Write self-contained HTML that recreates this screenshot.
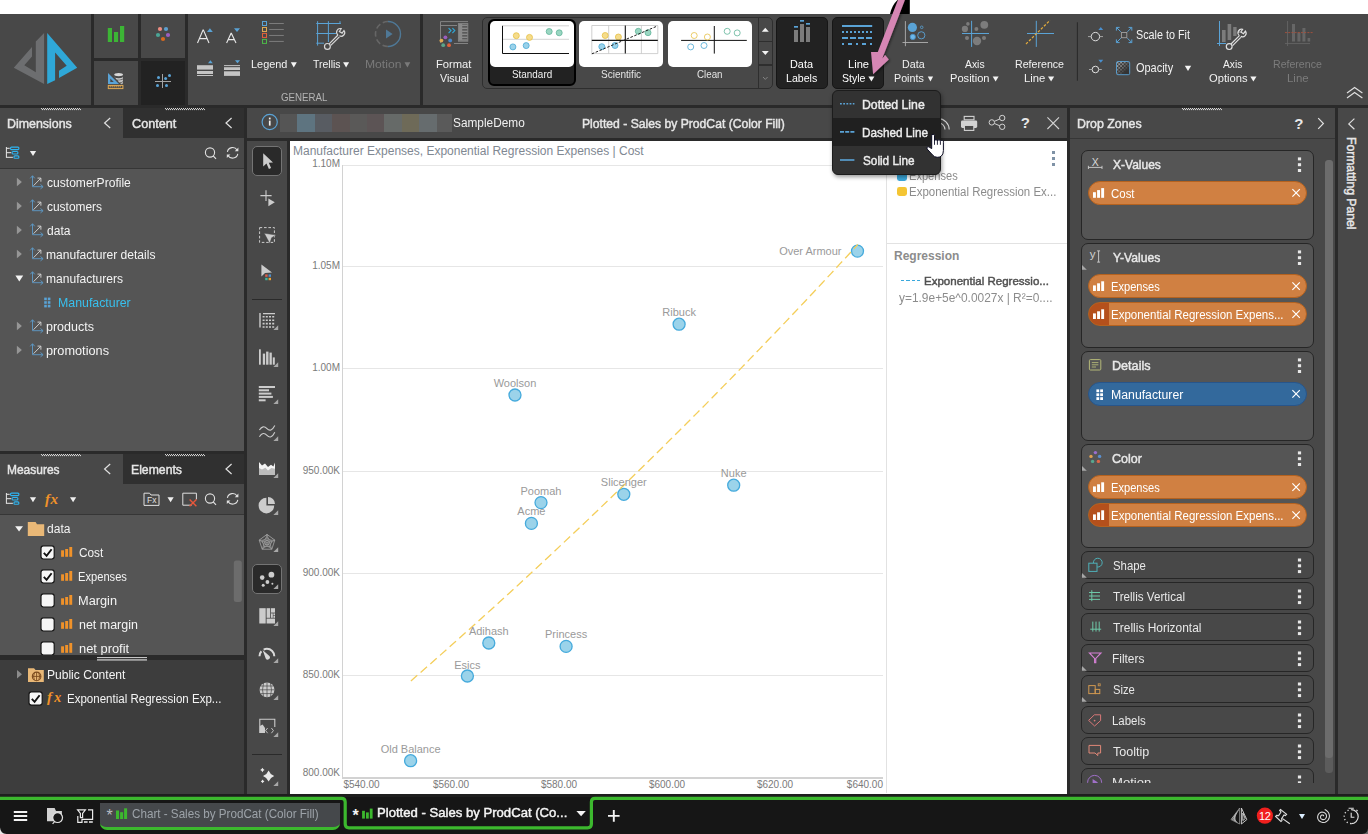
<!DOCTYPE html>
<html><head><meta charset="utf-8"><title>Plotted - Sales by ProdCat</title>
<style>
html,body{margin:0;padding:0;}
body{width:1368px;height:834px;overflow:hidden;background:#2a2a2a;font-family:"Liberation Sans",sans-serif;position:relative;}
#app{position:absolute;left:0;top:0;width:1368px;height:834px;overflow:hidden;}
#app div{position:absolute;box-sizing:border-box;}
.t{white-space:nowrap;line-height:1;}
svg.ov{position:absolute;left:0;top:0;overflow:visible;pointer-events:none;}
</style></head><body><div id="app">
<div style="left:0px;top:0px;width:1368px;height:14px;background:#ffffff;"></div>
<div style="left:0px;top:14px;width:1368px;height:91px;background:#484848;"></div>
<div style="left:91px;top:14px;width:3px;height:91px;background:#2a2a2a;"></div>
<div style="left:138px;top:14px;width:3px;height:91px;background:#2a2a2a;"></div>
<div style="left:185px;top:14px;width:3px;height:91px;background:#2a2a2a;"></div>
<div style="left:94px;top:58px;width:91px;height:3px;background:#2a2a2a;"></div>
<div style="left:141px;top:61px;width:44px;height:44px;background:#222222;"></div>
<div style="left:420px;top:14px;width:3px;height:91px;background:#2a2a2a;"></div>
<div style="left:0px;top:108px;width:123px;height:30px;background:#484848;"></div>
<div style="left:123px;top:108px;width:121px;height:30px;background:#303030;"></div>
<div style="left:0px;top:138px;width:244px;height:30px;background:#484848;"></div>
<div style="left:0px;top:168px;width:244px;height:1px;background:#363636;"></div>
<div style="left:0px;top:169px;width:244px;height:282px;background:#555555;"></div>
<div style="left:0px;top:451px;width:244px;height:3px;background:#2a2a2a;"></div>
<div style="left:0px;top:454px;width:123px;height:30px;background:#484848;"></div>
<div style="left:123px;top:454px;width:121px;height:30px;background:#303030;"></div>
<div style="left:0px;top:484px;width:244px;height:30px;background:#484848;"></div>
<div style="left:0px;top:514px;width:244px;height:1px;background:#363636;"></div>
<div style="left:0px;top:515px;width:244px;height:141px;background:#555555;"></div>
<div style="left:0px;top:656px;width:244px;height:4px;background:#2a2a2a;"></div>
<div style="left:0px;top:660px;width:244px;height:134px;background:#3d3d3d;"></div>
<div style="left:247px;top:108px;width:820px;height:30px;background:#484848;"></div>
<div style="left:247px;top:141px;width:40px;height:653px;background:#484848;"></div>
<div style="left:290px;top:141px;width:777px;height:653px;background:#ffffff;"></div>
<div style="left:1070px;top:108px;width:265px;height:30px;background:#484848;"></div>
<div style="left:1070px;top:139px;width:265px;height:654px;background:#555555;"></div>
<div style="left:1338px;top:108px;width:30px;height:686px;background:#484848;"></div>
<div style="left:0px;top:797px;width:1368px;height:3px;background:#3cb832;"></div>
<div style="left:0px;top:800px;width:1368px;height:34px;background:#1c1c1c;"></div>
<svg class="ov" width="1368" height="834" viewBox="0 0 1368 834" >
<polygon points="13.8,67.8 32,46.9 32,56.4 24.3,65.3 35.8,72.2 35.8,41.6 44.1,33 44.1,84" fill="#6d6e70"/>
<polygon points="47.2,33 77.2,67.8 59,77.9 59,70.8 66.7,65.8 55.1,52.6 55.1,80.2 47.2,84" fill="#2fa8d8"/>
<rect x="107.8" y="28" width="4.2" height="14" fill="#3cb535"/><rect x="114" y="32" width="4.1" height="10" fill="#3cb535"/><rect x="120" y="26" width="4.2" height="16" fill="#3cb535"/>
<circle cx="160" cy="29" r="2.1" fill="#ee8c80"/><circle cx="166" cy="29" r="2.1" fill="#5c9fd0"/><circle cx="158" cy="35" r="2.1" fill="#4aa596"/><circle cx="168" cy="35" r="2.1" fill="#9b5fc0"/><circle cx="163" cy="39" r="2.1" fill="#d8691e"/>
<g><path d="M108 73 L108 84 L119 84 Z" fill="#5aa3d6"/><path d="M110.3 78.5 L110.3 82 L113.8 82 Z" fill="#484848"/><rect x="108.3" y="85.4" width="14.6" height="3.2" fill="none" stroke="#e0aa55" stroke-width="1"/><path d="M110.2 85.5v1.9M112.2 85.5v1.9M114.2 85.5v1.9M116.2 85.5v1.9M118.2 85.5v1.9M120.2 85.5v1.9" stroke="#e0aa55" stroke-width="0.9"/><ellipse cx="118.6" cy="74.6" rx="4.4" ry="1.6" fill="#d8d8d8"/><path d="M114.2 76.6 a4.4 1.6 0 0 0 8.8 0 v1.6 a4.4 1.6 0 0 1 -6.5 1.3 z" fill="#c8c8c8"/><path d="M117.5 80.2 a4.4 1.6 0 0 0 5.5 -1 v1.8 a4.4 1.6 0 0 1 -3.9 1.5 z" fill="#c0c0c0"/><path d="M120 83 a4.4 1.6 0 0 0 3 -1.2 v1.6 l-1.6 0.8z" fill="#b8b8b8"/></g>
<path d="M162.5 74 V88 M155 81.5 H171" stroke="#a4a4a4" stroke-width="1"/><circle cx="158.5" cy="77.5" r="1.5" fill="#5aa3d6"/><circle cx="165.6" cy="78.5" r="1.5" fill="#5aa3d6"/><circle cx="169.5" cy="75.5" r="1.5" fill="#5aa3d6"/><circle cx="157.5" cy="85.5" r="1.5" fill="#5aa3d6"/><circle cx="166.5" cy="85.5" r="1.5" fill="#5aa3d6"/>
<path d="M197.5 43 L203 30 L203.4 30 L209 43 M199.6 38.6 H206.9" fill="none" stroke="#e8e8e8" stroke-width="1.1"/><path d="M207 32 L209.9 28.2 L212.8 32 Z" fill="#5aa3d6"/>
<path d="M226.6 43 L231 33.4 L231.4 33.4 L236 43 M228.4 39.6 H234.2" fill="none" stroke="#e8e8e8" stroke-width="1.1"/><path d="M234 28.2 L240 28.2 L237 32 Z" fill="#5aa3d6"/>
<rect x="197" y="65.2" width="16" height="4.4" fill="#c4c4c4"/><rect x="197" y="71" width="16" height="3" fill="#c4c4c4"/><rect x="197" y="75" width="16" height="1" fill="#c4c4c4"/><path d="M208 63.2 L210.4 60.2 L212.8 63.2 Z" fill="#5aa3d6"/>
<rect x="224" y="65.1" width="16" height="1" fill="#c4c4c4"/><rect x="224" y="67.2" width="16" height="2.8" fill="#c4c4c4"/><rect x="224" y="71.3" width="16" height="4.6" fill="#c4c4c4"/><path d="M235 60.2 L240 60.2 L237.5 63.2 Z" fill="#5aa3d6"/>
<rect x="262.5" y="21.5" width="4" height="4" fill="none" stroke="#5aa3d6" stroke-width="1"/><path d="M269.2 23.5 H283.8" stroke="#8a8a8a" stroke-width="0.8"/>
<rect x="262.5" y="27.47" width="4" height="4" fill="none" stroke="#e0aa55" stroke-width="1"/><path d="M269.2 29.47 H283.8" stroke="#8a8a8a" stroke-width="0.8"/>
<rect x="262.5" y="33.44" width="4" height="4" fill="none" stroke="#e2603a" stroke-width="1"/><path d="M269.2 35.44 H283.8" stroke="#8a8a8a" stroke-width="0.8"/>
<rect x="262.5" y="39.41" width="4" height="4" fill="none" stroke="#4cb848" stroke-width="1"/><path d="M269.2 41.41 H283.8" stroke="#8a8a8a" stroke-width="0.8"/>
<path d="M316.3 23.5 H340.7 M316.3 33.5 H336 M316.3 43.2 H324 M317.6 21.2 V45.6 M328.4 21.2 V42 M340 21.2 V24" stroke="#5aa3d6" stroke-width="1" fill="none"/>
<g fill="none" stroke="#d8d8d8" stroke-width="1.2"><circle cx="327.4" cy="46.4" r="2.9"/><path d="M329.2 43.8 L338 35 M330.8 45.4 L339.4 36.8"/><path d="M338 35 a3.6 3.6 0 0 1 3.2 -6.3 l-1.8 2.8 l2.7 1.6 l1.9 -2.6 a3.6 3.6 0 0 1 -4.6 5.3"/></g>
<path d="M388 21.5 A12.5 12.5 0 0 1 388 46.5" fill="none" stroke="#4f7896" stroke-width="1.4"/><path d="M388 46.5 A12.5 12.5 0 0 1 388 21.5" fill="none" stroke="#666" stroke-width="1.6" stroke-dasharray="5.6 2.8"/><path d="M386 29.6 L392.6 34 L386 38.4 Z" fill="#4f7896"/>
<g fill="none" stroke="#8a8a8a" stroke-width="0.9"><path d="M440.5 43 V21.6 H468 M440.5 25.5 H457"/><rect x="458.4" y="23.6" width="9.4" height="17.6"/><path d="M454 43.5 H468"/></g><path d="M462 25.3h5.6M462 28.3h5.6M462 31.3h5.6M462 34.3h5.6M462 37.3h5.6M462 40h5.6" stroke="#8a8a8a" stroke-width="1.7"/><rect x="458.8" y="24" width="3.4" height="16.8" fill="#8a8a8a"/><path d="M448.6 28.2 l2.4 2.4 l-2.4 2.4 M452.4 28.2 l2.4 2.4 l-2.4 2.4" fill="none" stroke="#2fa8d8" stroke-width="1.1"/><circle cx="445.4" cy="37.3" r="1.9" fill="#9b5fc0"/><circle cx="441.4" cy="40.6" r="1.9" fill="#e0aa55"/><circle cx="450.2" cy="40.4" r="1.9" fill="#4a86c8"/><circle cx="443.2" cy="45.2" r="1.9" fill="#5aa58a"/><circle cx="449" cy="45.2" r="1.9" fill="#e2603a"/>
</svg>
<div class="t" style="top:58px;line-height:12px;height:12px;font-size:11.5px;color:#f2f2f2;left:250.93px;transform-origin:0 50%;transform:scaleX(0.9484);">Legend</div>
<div class="t" style="top:58px;line-height:12px;height:12px;font-size:11.5px;color:#f2f2f2;left:312.99px;transform-origin:0 50%;transform:scaleX(0.91);">Trellis</div>
<div class="t" style="top:58px;line-height:12px;height:12px;font-size:11.5px;color:#7a7a7a;left:365.03px;transform-origin:0 50%;transform:scaleX(1.0544);">Motion</div>
<div class="t" style="top:91px;line-height:12px;height:12px;font-size:11px;color:#b4b4b4;left:280.71px;transform-origin:0 50%;transform:scaleX(0.882);">GENERAL</div>
<div class="t" style="top:58px;line-height:12px;height:12px;font-size:11.5px;color:#f2f2f2;left:435.8px;transform-origin:0 50%;transform:scaleX(0.9737);">Format</div>
<div class="t" style="top:72px;line-height:12px;height:12px;font-size:11.5px;color:#f2f2f2;left:440.0px;transform-origin:0 50%;transform:scaleX(0.9321);">Visual</div>
<svg class="ov" width="1368" height="834" viewBox="0 0 1368 834" >
<path d="M290.8 62.2 h6 l-3 5.2z" fill="#f4f4f4"/><path d="M343.1 62.2 h6 l-3 5.2z" fill="#f4f4f4"/><path d="M404.5 62.2 h5.8 l-2.9 5.2z" fill="#7a7a7a"/>
</svg>
<div style="left:482px;top:17px;width:291px;height:72px;border:1px solid #2e2e2e;border-radius:5px;"></div>
<div style="left:488px;top:19px;width:88px;height:67px;background:#222222;border:2px solid #000;border-radius:6px;"></div>
<div style="left:490px;top:21px;width:84px;height:46px;background:#ffffff;border-radius:5px;"></div>
<div style="left:579px;top:21px;width:84px;height:46px;background:#ffffff;border-radius:5px;"></div>
<div style="left:668px;top:21px;width:84px;height:46px;background:#ffffff;border-radius:5px;"></div>
<div style="left:758px;top:18px;width:1px;height:70px;background:#2e2e2e;"></div>
<div style="left:759px;top:40.5px;width:13px;height:1.2px;background:#2e2e2e;"></div>
<div style="left:759px;top:64.2px;width:13px;height:1.4px;background:#2e2e2e;"></div>
<div class="t" style="top:68px;line-height:12px;height:12px;font-size:10.5px;color:#f2f2f2;left:512.2px;transform-origin:0 50%;transform:scaleX(0.9428);">Standard</div>
<div class="t" style="top:68px;line-height:12px;height:12px;font-size:10.5px;color:#e4e4e4;left:601.1px;transform-origin:0 50%;transform:scaleX(0.9548);">Scientific</div>
<div class="t" style="top:68px;line-height:12px;height:12px;font-size:10.5px;color:#e4e4e4;left:697.41px;transform-origin:0 50%;transform:scaleX(0.9296);">Clean</div>
<div style="left:776px;top:17px;width:52px;height:72px;background:#222222;border:1px solid #161616;border-radius:5px;"></div>
<div style="left:832px;top:17px;width:52px;height:72px;background:#222222;border:1px solid #161616;border-radius:5px;"></div>
<svg class="ov" width="1368" height="834" viewBox="0 0 1368 834" >
<path d="M502.5 25.8 H569 M502.5 39.3 H569" stroke="#c8c8c8" stroke-width="0.8"/><path d="M502.5 25.8 V53.5 H569" fill="none" stroke="#111" stroke-width="1"/>
<circle cx="516.3" cy="35.7" r="3" fill="#f5dc8c" stroke="#e6c046" stroke-width="0.8"/>
<circle cx="529.5" cy="37.4" r="3" fill="#f5dc8c" stroke="#e6c046" stroke-width="0.8"/>
<circle cx="549.2" cy="31.5" r="3" fill="#9ad6c2" stroke="#5fb498" stroke-width="0.8"/>
<circle cx="559.2" cy="32.8" r="3" fill="#9ad6c2" stroke="#5fb498" stroke-width="0.8"/>
<circle cx="512.9" cy="46.9" r="3" fill="#9ad2ea" stroke="#4aa8d4" stroke-width="0.8"/>
<circle cx="526.2" cy="45.6" r="3" fill="#9ad2ea" stroke="#4aa8d4" stroke-width="0.8"/>
<path d="M591.8 25.5 H657.8 V53.6 H591.8 Z M608.7 25.5 V53.6 M641.4 25.5 V53.6" fill="none" stroke="#c4c4c4" stroke-width="0.8"/>
<circle cx="605.2" cy="35.5" r="3" fill="#f5dc8c" stroke="#e6c046" stroke-width="0.8"/>
<circle cx="618.4" cy="37" r="3" fill="#f5dc8c" stroke="#e6c046" stroke-width="0.8"/>
<circle cx="638.3" cy="31.3" r="3" fill="#9ad6c2" stroke="#5fb498" stroke-width="0.8"/>
<circle cx="648" cy="32.7" r="3" fill="#9ad6c2" stroke="#5fb498" stroke-width="0.8"/>
<circle cx="601.8" cy="46.7" r="3" fill="#9ad2ea" stroke="#4aa8d4" stroke-width="0.8"/>
<circle cx="615" cy="45.5" r="3" fill="#9ad2ea" stroke="#4aa8d4" stroke-width="0.8"/>
<path d="M625.3 25.5 V53.6 M591.8 40.4 H657.8" stroke="#111" stroke-width="1.1"/><path d="M591.8 53.9 L656.7 26.3" stroke="#222" stroke-width="1" stroke-dasharray="2.6 1.6"/>
<path d="M714.3 26 V53.6 M681.1 40.4 H746.8" stroke="#111" stroke-width="1"/>
<circle cx="694.2" cy="35.5" r="3" fill="none" stroke="#e6c046" stroke-width="0.8"/>
<circle cx="707.4" cy="37" r="3" fill="none" stroke="#e6c046" stroke-width="0.8"/>
<circle cx="727.2" cy="31.3" r="3" fill="none" stroke="#5fb498" stroke-width="0.8"/>
<circle cx="737.2" cy="32.9" r="3" fill="none" stroke="#5fb498" stroke-width="0.8"/>
<circle cx="690.7" cy="46.9" r="3" fill="none" stroke="#4aa8d4" stroke-width="0.8"/>
<circle cx="704" cy="45.5" r="3" fill="none" stroke="#4aa8d4" stroke-width="0.8"/>
<path d="M761.8 31.8 L765.3 27.8 L768.8 31.8 Z" fill="#f2f2f2"/><path d="M761.8 51.1 L768.8 51.1 L765.3 55.1 Z" fill="#f2f2f2"/><path d="M763 77 L765.3 79.4 L767.6 77" fill="none" stroke="#8a8a8a" stroke-width="0.9"/>
<rect x="794" y="30" width="4" height="12" fill="#7c7c7c"/><rect x="800" y="24" width="4" height="18" fill="#7c7c7c"/><rect x="806" y="27" width="4" height="15" fill="#7c7c7c"/><rect x="794" y="26" width="4" height="1.7" fill="#5aa3d6"/><rect x="800" y="20" width="4" height="1.7" fill="#5aa3d6"/><rect x="806" y="23" width="4" height="1.7" fill="#5aa3d6"/>
<path d="M842 26 H872.2" stroke="#5aa3d6" stroke-width="2"/><path d="M842 31.9 H872.2" stroke="#5aa3d6" stroke-width="2" stroke-dasharray="2 2"/><path d="M842 38 H872.2" stroke="#5aa3d6" stroke-width="2" stroke-dasharray="6 2"/><path d="M842 43.9 H872.2" stroke="#5aa3d6" stroke-width="2" stroke-dasharray="2 4 4 4"/>
<path d="M905.4 21.1 V46.2 M902.5 42.5 H928" stroke="#b0b0b0" stroke-width="0.9"/><circle cx="912.4" cy="27.4" r="4.6" fill="#5aa3d6"/><circle cx="921.7" cy="27.3" r="1.3" fill="none" stroke="#5aa3d6" stroke-width="0.8"/><circle cx="912.8" cy="36.9" r="2.6" fill="#6db8ea" stroke="#4a90c4" stroke-width="0.9"/><circle cx="921.3" cy="35.3" r="3.6" fill="none" stroke="#5aa3d6" stroke-width="0.9"/>
<circle cx="967.9" cy="23.9" r="1.8" fill="#7c7c7c"/>
<circle cx="964.9" cy="28.9" r="3.1" fill="#7c7c7c"/>
<circle cx="976.4" cy="28.9" r="2" fill="#7c7c7c"/>
<circle cx="984.3" cy="24.8" r="3.9" fill="#7c7c7c"/>
<circle cx="967" cy="37.9" r="2" fill="#7c7c7c"/>
<circle cx="977" cy="41" r="4.2" fill="#7c7c7c"/>
<circle cx="984" cy="37.9" r="2" fill="#7c7c7c"/>
<path d="M971.6 20.8 V46.9 M962 33.5 H989" stroke="#5aa3d6" stroke-width="1"/>
<path d="M1036.3 20.8 V46.9 M1027 33.5 H1054" stroke="#5aa3d6" stroke-width="1"/><path d="M1026 44 L1050 20.3" stroke="#e4ac3c" stroke-width="1.2" stroke-dasharray="2.6 1.6"/>
<path d="M1077.4 22.2 V80.8" stroke="#2c2c2c" stroke-width="1.1"/>
<circle cx="1095.4" cy="36.6" r="4.2" fill="none" stroke="#e0e0e0" stroke-width="1"/><path d="M1088 36.6 H1091.2 M1099.6 36.6 H1103" stroke="#b0b0b0" stroke-width="0.9"/><path d="M1098.4 30 L1100.8 27 L1103.2 30Z" fill="#4a90d0"/>
<circle cx="1095.4" cy="69.5" r="3.3" fill="none" stroke="#e0e0e0" stroke-width="1"/><path d="M1089 69.5 H1092.1 M1098.7 69.5 H1101.8" stroke="#b0b0b0" stroke-width="0.9"/><path d="M1098.4 59.8 L1103.2 59.8 L1100.8 62.8Z" fill="#4a90d0"/>
<g fill="none" stroke="#5aa3d6" stroke-width="1"><path d="M1116.4 30.6 V27.4 H1119.6 M1116.6 27.6 L1120.8 31.8 M1128.6 27.4 H1131.8 V30.6 M1131.6 27.6 L1127.4 31.8 M1116.4 39.4 V42.6 H1119.6 M1116.6 42.4 L1120.8 38.2 M1131.8 39.4 V42.6 H1128.6 M1131.6 42.4 L1127.4 38.2"/></g><rect x="1121.4" y="32.5" width="5.4" height="5.2" fill="none" stroke="#a0a0a0" stroke-width="0.9"/>
<defs><pattern id="chk" x="1116.6" y="61.6" width="3.6" height="3.6" patternUnits="userSpaceOnUse"><rect width="1.8" height="1.8" fill="#a4a4a4"/><rect x="1.8" y="1.8" width="1.8" height="1.8" fill="#a4a4a4"/></pattern><linearGradient id="og" x1="0" y1="0" x2="1" y2="1"><stop offset="0.15" stop-color="#333" stop-opacity="0"/><stop offset="0.75" stop-color="#333" stop-opacity="1"/></linearGradient></defs><rect x="1116.5" y="61.5" width="13.2" height="13.2" rx="1.4" fill="#3c3c3c"/><rect x="1116.5" y="61.5" width="13.2" height="13.2" rx="1.4" fill="url(#chk)"/><rect x="1116.5" y="61.5" width="13.2" height="13.2" rx="1.4" fill="url(#og)" stroke="#5aa3d6" stroke-width="0.9"/>
<path d="M1219.5 21 V46 M1217 43.5 H1226" stroke="#5aa3d6" stroke-width="1"/><rect x="1222" y="30" width="3.6" height="12" fill="#7c7c7c"/><rect x="1227.6" y="24" width="3.6" height="16" fill="#7c7c7c"/><rect x="1233.2" y="27" width="3.4" height="9" fill="#7c7c7c"/><rect x="1238" y="30" width="2" height="3" fill="#7c7c7c"/><g fill="none" stroke="#e0e0e0" stroke-width="1.2"><circle cx="1229.2" cy="46.6" r="2.9"/><path d="M1231 44 L1239.4 35.6 M1232.6 45.6 L1240.8 37.4"/><path d="M1239.4 35.6 a3.6 3.6 0 0 1 3.2 -6.3 l-1.8 2.8 l2.7 1.6 l1.9 -2.6 a3.6 3.6 0 0 1 -4.6 5.3"/></g>
<path d="M1287.6 21 V46 M1285 43.6 H1310" stroke="#666" stroke-width="0.9"/><rect x="1292" y="24" width="3" height="17.5" fill="#666"/><rect x="1297.4" y="32.5" width="3" height="9" fill="#666"/><rect x="1302.4" y="28" width="3" height="13.5" fill="#666"/><rect x="1307.6" y="38" width="2.6" height="3.5" fill="#666"/><path d="M1285 32.6 H1312.6" stroke="#a8503c" stroke-width="0.9" stroke-dasharray="2 1.2"/>
<path d="M1347 93 L1354.6 87.6 L1362.4 93 M1347 98 L1354.6 92.6 L1362.4 98" fill="none" stroke="#e0e0e0" stroke-width="1.2"/>
<path d="M868.4 76.4 H874.4000000000001 L871.4000000000001 81.60000000000001Z" fill="#f4f4f4"/>
<path d="M927.8 76.4 H933.1 L930.45 81.60000000000001Z" fill="#f4f4f4"/>
<path d="M992.6999999999999 76.4 H998.6 L995.65 81.60000000000001Z" fill="#f4f4f4"/>
<path d="M1048.0 76.4 H1054.2 L1051.1 81.60000000000001Z" fill="#f4f4f4"/>
<path d="M1250.3 76.4 H1256.5 L1253.4 81.60000000000001Z" fill="#f4f4f4"/>
<path d="M1184.8 65.8 H1191.2 L1188.0 71.0Z" fill="#f4f4f4"/>
</svg>
<div class="t" style="top:58px;line-height:12px;height:12px;font-size:11.5px;color:#fff;left:790.23px;transform-origin:0 50%;transform:scaleX(0.9463);">Data</div>
<div class="t" style="top:72px;line-height:12px;height:12px;font-size:11.5px;color:#fff;left:786.25px;transform-origin:0 50%;transform:scaleX(0.9216);">Labels</div>
<div class="t" style="top:58px;line-height:12px;height:12px;font-size:11.5px;color:#fff;left:847.61px;transform-origin:0 50%;transform:scaleX(0.9678);">Line</div>
<div class="t" style="top:72px;line-height:12px;height:12px;font-size:11.5px;color:#fff;left:841.88px;transform-origin:0 50%;transform:scaleX(0.9181);">Style</div>
<div class="t" style="top:58px;line-height:12px;height:12px;font-size:11.5px;color:#f2f2f2;left:902.35px;transform-origin:0 50%;transform:scaleX(0.9292);">Data</div>
<div class="t" style="top:72px;line-height:12px;height:12px;font-size:11.5px;color:#f2f2f2;left:894.14px;transform-origin:0 50%;transform:scaleX(0.9314);">Points</div>
<div class="t" style="top:58px;line-height:12px;height:12px;font-size:11.5px;color:#f2f2f2;left:964.9px;transform-origin:0 50%;transform:scaleX(0.9023);">Axis</div>
<div class="t" style="top:72px;line-height:12px;height:12px;font-size:11.5px;color:#f2f2f2;left:950.11px;transform-origin:0 50%;transform:scaleX(0.9662);">Position</div>
<div class="t" style="top:58px;line-height:12px;height:12px;font-size:11.5px;color:#f2f2f2;left:1014.95px;transform-origin:0 50%;transform:scaleX(0.9237);">Reference</div>
<div class="t" style="top:72px;line-height:12px;height:12px;font-size:11.5px;color:#f2f2f2;left:1024.1px;transform-origin:0 50%;transform:scaleX(0.9776);">Line</div>
<div class="t" style="top:28px;line-height:14px;height:14px;font-size:12px;color:#f2f2f2;left:1136.17px;transform-origin:0 50%;transform:scaleX(0.8989);">Scale to Fit</div>
<div class="t" style="top:61px;line-height:14px;height:14px;font-size:12px;color:#f2f2f2;left:1135.76px;transform-origin:0 50%;transform:scaleX(0.9129);">Opacity</div>
<div class="t" style="top:58px;line-height:12px;height:12px;font-size:11.5px;color:#f2f2f2;left:1223.0px;transform-origin:0 50%;transform:scaleX(0.8883);">Axis</div>
<div class="t" style="top:72px;line-height:12px;height:12px;font-size:11.5px;color:#f2f2f2;left:1208.65px;transform-origin:0 50%;transform:scaleX(0.9725);">Options</div>
<div class="t" style="top:58px;line-height:12px;height:12px;font-size:11.5px;color:#7c7c7c;left:1272.95px;transform-origin:0 50%;transform:scaleX(0.9198);">Reference</div>
<div class="t" style="top:72px;line-height:12px;height:12px;font-size:11.5px;color:#7c7c7c;left:1286.59px;transform-origin:0 50%;transform:scaleX(0.9924);">Line</div>
<svg class="ov" width="1368" height="834" viewBox="0 0 1368 834" >
<path d="M41 108.6 H81" stroke="#e4e4e4" stroke-width="1" stroke-dasharray="1 1"/><path d="M42 109.6 H82" stroke="#e4e4e4" stroke-width="1" stroke-dasharray="1 1"/>
<path d="M165 108.6 H205" stroke="#e4e4e4" stroke-width="1" stroke-dasharray="1 1"/><path d="M166 109.6 H206" stroke="#e4e4e4" stroke-width="1" stroke-dasharray="1 1"/>
<path d="M41 454.6 H81" stroke="#e4e4e4" stroke-width="1" stroke-dasharray="1 1"/><path d="M42 455.6 H82" stroke="#e4e4e4" stroke-width="1" stroke-dasharray="1 1"/>
<path d="M165 454.6 H205" stroke="#e4e4e4" stroke-width="1" stroke-dasharray="1 1"/><path d="M166 455.6 H206" stroke="#e4e4e4" stroke-width="1" stroke-dasharray="1 1"/>
<path d="M1182 108.6 H1222" stroke="#e4e4e4" stroke-width="1" stroke-dasharray="1 1"/><path d="M1183 109.6 H1223" stroke="#e4e4e4" stroke-width="1" stroke-dasharray="1 1"/>
<path d="M110.19999999999999 118 L104.6 123 L110.19999999999999 128" fill="none" stroke="#e0e0e0" stroke-width="1.2"/>
<path d="M231.6 118 L226 123 L231.6 128" fill="none" stroke="#e0e0e0" stroke-width="1.2"/>
<path d="M110.19999999999999 464 L104.6 469 L110.19999999999999 474" fill="none" stroke="#e0e0e0" stroke-width="1.2"/>
<path d="M231.6 464 L226 469 L231.6 474" fill="none" stroke="#e0e0e0" stroke-width="1.2"/>
<path d="M6.4 147 V157.8 M6.4 148.3 H9.7 M6.4 152.7 H11.3 M6.4 157.3 H12.9" fill="none" stroke="#e8e8e8" stroke-width="1"/><rect x="10.5" y="147.1" width="8.4" height="2.5" rx="1" fill="none" stroke="#2fb4f0" stroke-width="1.1"/><rect x="12.100000000000001" y="151.5" width="5.8" height="2.5" rx="1" fill="none" stroke="#2fb4f0" stroke-width="1.1"/><rect x="13.9" y="155.9" width="5" height="2.4" rx="1" fill="none" stroke="#2fb4f0" stroke-width="1.1"/>
<path d="M29.9 151 h6.2 l-3.1 5z" fill="#f0f0f0"/>
<circle cx="210" cy="152.5" r="4.6" fill="none" stroke="#e0e0e0" stroke-width="1.1"/><path d="M213.2 155.9 L216 158.9" stroke="#e0e0e0" stroke-width="1.2"/>
<g fill="none" stroke="#e0e0e0" stroke-width="1.1"><path d="M227.4 151.8 A5.3 5.3 0 0 1 237.2 150.20000000000002"/><path d="M237.79999999999998 153.8 A5.3 5.3 0 0 1 228.0 155.4"/></g><path d="M238.4 147.60000000000002 v3.6 h-3.6z" fill="#e0e0e0"/><path d="M226.79999999999998 158.0 v-3.6 h3.6z" fill="#e0e0e0"/>
<path d="M16.9 177.8 v8.4 l5 -4.2z" fill="#969696"/>
<path d="M32.5 186.7 V176.1 M30.3 178.29999999999998 L32.5 175.7 L34.7 178.29999999999998 M32.5 186.7 H42.7 M40.5 184.5 L43.1 186.7 L40.5 188.89999999999998" fill="none" stroke="#5e9fd0" stroke-width="0.85"/><path d="M33.5 185.7 L40.7 178.29999999999998 M37.5 178.1 H40.9 V181.7" fill="none" stroke="#d8d8d8" stroke-width="0.9"/>
<path d="M16.9 201.8 v8.4 l5 -4.2z" fill="#969696"/>
<path d="M32.5 210.7 V200.1 M30.3 202.29999999999998 L32.5 199.7 L34.7 202.29999999999998 M32.5 210.7 H42.7 M40.5 208.5 L43.1 210.7 L40.5 212.89999999999998" fill="none" stroke="#5e9fd0" stroke-width="0.85"/><path d="M33.5 209.7 L40.7 202.29999999999998 M37.5 202.1 H40.9 V205.7" fill="none" stroke="#d8d8d8" stroke-width="0.9"/>
<path d="M16.9 225.8 v8.4 l5 -4.2z" fill="#969696"/>
<path d="M32.5 234.7 V224.1 M30.3 226.29999999999998 L32.5 223.7 L34.7 226.29999999999998 M32.5 234.7 H42.7 M40.5 232.5 L43.1 234.7 L40.5 236.89999999999998" fill="none" stroke="#5e9fd0" stroke-width="0.85"/><path d="M33.5 233.7 L40.7 226.29999999999998 M37.5 226.1 H40.9 V229.7" fill="none" stroke="#d8d8d8" stroke-width="0.9"/>
<path d="M16.9 249.8 v8.4 l5 -4.2z" fill="#969696"/>
<path d="M32.5 258.7 V248.1 M30.3 250.29999999999998 L32.5 247.7 L34.7 250.29999999999998 M32.5 258.7 H42.7 M40.5 256.5 L43.1 258.7 L40.5 260.9" fill="none" stroke="#5e9fd0" stroke-width="0.85"/><path d="M33.5 257.7 L40.7 250.29999999999998 M37.5 250.1 H40.9 V253.7" fill="none" stroke="#d8d8d8" stroke-width="0.9"/>
<path d="M15.4 275.4 h7.8 l-3.9 6z" fill="#f4f4f4"/>
<path d="M32.5 282.7 V272.09999999999997 M30.3 274.3 L32.5 271.7 L34.7 274.3 M32.5 282.7 H42.7 M40.5 280.5 L43.1 282.7 L40.5 284.9" fill="none" stroke="#5e9fd0" stroke-width="0.85"/><path d="M33.5 281.7 L40.7 274.3 M37.5 274.09999999999997 H40.9 V277.7" fill="none" stroke="#d8d8d8" stroke-width="0.9"/>
<path d="M16.9 321.8 v8.4 l5 -4.2z" fill="#969696"/>
<path d="M32.5 330.7 V320.09999999999997 M30.3 322.3 L32.5 319.7 L34.7 322.3 M32.5 330.7 H42.7 M40.5 328.5 L43.1 330.7 L40.5 332.9" fill="none" stroke="#5e9fd0" stroke-width="0.85"/><path d="M33.5 329.7 L40.7 322.3 M37.5 322.09999999999997 H40.9 V325.7" fill="none" stroke="#d8d8d8" stroke-width="0.9"/>
<path d="M16.9 345.8 v8.4 l5 -4.2z" fill="#969696"/>
<path d="M32.5 354.7 V344.09999999999997 M30.3 346.3 L32.5 343.7 L34.7 346.3 M32.5 354.7 H42.7 M40.5 352.5 L43.1 354.7 L40.5 356.9" fill="none" stroke="#5e9fd0" stroke-width="0.85"/><path d="M33.5 353.7 L40.7 346.3 M37.5 346.09999999999997 H40.9 V349.7" fill="none" stroke="#d8d8d8" stroke-width="0.9"/>
<rect x="44.2" y="297.6" width="2.6" height="2.6" fill="#5aa3d6"/>
<rect x="47.800000000000004" y="297.6" width="2.6" height="2.6" fill="#5aa3d6"/>
<rect x="44.2" y="301.20000000000005" width="2.6" height="2.6" fill="#5aa3d6"/>
<rect x="47.800000000000004" y="301.20000000000005" width="2.6" height="2.6" fill="#5aa3d6"/>
<rect x="44.2" y="304.8" width="2.6" height="2.6" fill="#5aa3d6"/>
<rect x="47.800000000000004" y="304.8" width="2.6" height="2.6" fill="#5aa3d6"/>
</svg>
<div class="t" style="top:116px;line-height:15px;height:15px;font-size:13px;color:#e6e6e6;-webkit-text-stroke:0.45px;left:7.41px;transform-origin:0 50%;transform:scaleX(0.9544);">Dimensions</div>
<div class="t" style="top:116px;line-height:15px;height:15px;font-size:13px;color:#e6e6e6;-webkit-text-stroke:0.45px;left:131.77px;transform-origin:0 50%;transform:scaleX(0.9721);">Content</div>
<div class="t" style="top:176px;line-height:14px;height:14px;font-size:12px;color:#f4f4f4;left:46.62px;transform-origin:0 50%;transform:scaleX(1.0056);">customerProfile</div>
<div class="t" style="top:200px;line-height:14px;height:14px;font-size:12px;color:#f4f4f4;left:46.62px;transform-origin:0 50%;transform:scaleX(0.9949);">customers</div>
<div class="t" style="top:224px;line-height:14px;height:14px;font-size:12px;color:#f4f4f4;left:46.62px;transform-origin:0 50%;transform:scaleX(1.0035);">data</div>
<div class="t" style="top:248px;line-height:14px;height:14px;font-size:12px;color:#f4f4f4;left:46.37px;transform-origin:0 50%;transform:scaleX(1.0071);">manufacturer details</div>
<div class="t" style="top:272px;line-height:14px;height:14px;font-size:12px;color:#f4f4f4;left:46.38px;transform-origin:0 50%;transform:scaleX(1.004);">manufacturers</div>
<div class="t" style="top:320px;line-height:14px;height:14px;font-size:12px;color:#f4f4f4;left:46.35px;transform-origin:0 50%;transform:scaleX(1.0422);">products</div>
<div class="t" style="top:344px;line-height:14px;height:14px;font-size:12px;color:#f4f4f4;left:46.34px;transform-origin:0 50%;transform:scaleX(1.0614);">promotions</div>
<div class="t" style="top:296px;line-height:14px;height:14px;font-size:12px;color:#38c0ee;left:58.01px;transform-origin:0 50%;transform:scaleX(1.0287);">Manufacturer</div>
<svg class="ov" width="1368" height="834" viewBox="0 0 1368 834" >
<path d="M6.4 493 V503.8 M6.4 494.3 H9.7 M6.4 498.7 H11.3 M6.4 503.3 H12.9" fill="none" stroke="#e8e8e8" stroke-width="1"/><rect x="10.5" y="493.1" width="8.4" height="2.5" rx="1" fill="none" stroke="#2fb4f0" stroke-width="1.1"/><rect x="12.100000000000001" y="497.5" width="5.8" height="2.5" rx="1" fill="none" stroke="#2fb4f0" stroke-width="1.1"/><rect x="13.9" y="501.9" width="5" height="2.4" rx="1" fill="none" stroke="#2fb4f0" stroke-width="1.1"/>
<path d="M29.9 497.2 h6.2 l-3.1 5z" fill="#f0f0f0"/>
<path d="M70 497.2 h6.2 l-3.1 5z" fill="#f0f0f0"/>
<path d="M167.5 497.2 h6.2 l-3.1 5z" fill="#f0f0f0"/>
<path d="M144 505.4 V493.2 H149.6 L151 495 H159 V505.4 Z" fill="none" stroke="#e0e0e0" stroke-width="1"/>
<path d="M191.6 505.2 H182.8 V493.2 H196.4 V499.4" fill="none" stroke="#e0e0e0" stroke-width="1"/><path d="M189.6 499.6 L196.4 506.2 M196.4 499.6 L189.6 506.2" stroke="#e8563a" stroke-width="1.4"/>
<circle cx="210" cy="498.5" r="4.6" fill="none" stroke="#e0e0e0" stroke-width="1.1"/><path d="M213.2 501.9 L216 504.9" stroke="#e0e0e0" stroke-width="1.2"/>
<g fill="none" stroke="#e0e0e0" stroke-width="1.1"><path d="M227.4 497.8 A5.3 5.3 0 0 1 237.2 496.2"/><path d="M237.79999999999998 499.8 A5.3 5.3 0 0 1 228.0 501.40000000000003"/></g><path d="M238.4 493.6 v3.6 h-3.6z" fill="#e0e0e0"/><path d="M226.79999999999998 504.0 v-3.6 h3.6z" fill="#e0e0e0"/>
<path d="M15.1 526.2 h7.9 l-3.95 5.2z" fill="#f4f4f4"/>
<path d="M27.8 536 V522 H35.6 L37 524.2 H44.2 V536 Z" fill="#e9b877"/>
<rect x="41.0" y="545.8000000000001" width="13.2" height="13.2" rx="2.4" fill="#f6f6f6" stroke="#161616" stroke-width="1.2"/>
<path d="M43.8 552.8000000000001 L46.6 555.8000000000001 L51.599999999999994 549.2" fill="none" stroke="#111" stroke-width="1.9"/>
<rect x="61.1" y="550.3" width="2.9" height="6.5" fill="#f0922a"/><rect x="65.2" y="549.0" width="2.9" height="7.8" fill="#f0922a"/><rect x="69.3" y="547.0" width="2.9" height="9.8" fill="#f0922a"/>
<rect x="41.0" y="569.8000000000001" width="13.2" height="13.2" rx="2.4" fill="#f6f6f6" stroke="#161616" stroke-width="1.2"/>
<path d="M43.8 576.8000000000001 L46.6 579.8000000000001 L51.599999999999994 573.2" fill="none" stroke="#111" stroke-width="1.9"/>
<rect x="61.1" y="574.3" width="2.9" height="6.5" fill="#f0922a"/><rect x="65.2" y="573.0" width="2.9" height="7.8" fill="#f0922a"/><rect x="69.3" y="571.0" width="2.9" height="9.8" fill="#f0922a"/>
<rect x="41.0" y="593.8000000000001" width="13.2" height="13.2" rx="2.4" fill="#f6f6f6" stroke="#161616" stroke-width="1.2"/>
<rect x="61.1" y="598.3" width="2.9" height="6.5" fill="#f0922a"/><rect x="65.2" y="597.0" width="2.9" height="7.8" fill="#f0922a"/><rect x="69.3" y="595.0" width="2.9" height="9.8" fill="#f0922a"/>
<rect x="41.0" y="617.8000000000001" width="13.2" height="13.2" rx="2.4" fill="#f6f6f6" stroke="#161616" stroke-width="1.2"/>
<rect x="61.1" y="622.3" width="2.9" height="6.5" fill="#f0922a"/><rect x="65.2" y="621.0" width="2.9" height="7.8" fill="#f0922a"/><rect x="69.3" y="619.0" width="2.9" height="9.8" fill="#f0922a"/>
<rect x="41.0" y="641.8000000000001" width="13.2" height="13.2" rx="2.4" fill="#f6f6f6" stroke="#161616" stroke-width="1.2"/>
<rect x="61.1" y="646.3" width="2.9" height="6.5" fill="#f0922a"/><rect x="65.2" y="645.0" width="2.9" height="7.8" fill="#f0922a"/><rect x="69.3" y="643.0" width="2.9" height="9.8" fill="#f0922a"/>
<rect x="233.8" y="560.5" width="8" height="41.5" rx="2.5" fill="#6c6c6c"/>
<path d="M97 657.6 H147 M97 659.8 H147" stroke="#e8e8e8" stroke-width="0.9"/>
<path d="M17 670 v8.4 l5 -4.2z" fill="#8c8c8c"/>
<path d="M28 682 V668.2 H34 L35.6 670 H43.8 V682 Z" fill="#e9b877"/><circle cx="36.6" cy="676.4" r="4.3" fill="none" stroke="#7a4a1e" stroke-width="1.1"/><path d="M32.3 676.4 H40.9 M36.6 672.1 V680.7 M34.4 672.9 Q32.8 676.4 34.4 679.9 M38.8 672.9 Q40.4 676.4 38.8 679.9" fill="none" stroke="#7a4a1e" stroke-width="0.9"/>
<rect x="29.0" y="691.9" width="13.2" height="13.2" rx="2.4" fill="#f6f6f6" stroke="#161616" stroke-width="1.2"/>
<path d="M31.799999999999997 698.9 L34.6 701.9 L39.599999999999994 695.3" fill="none" stroke="#111" stroke-width="1.9"/>
</svg>
<div class="t" style="top:462px;line-height:15px;height:15px;font-size:13px;color:#e6e6e6;-webkit-text-stroke:0.45px;left:7.44px;transform-origin:0 50%;transform:scaleX(0.9202);">Measures</div>
<div class="t" style="top:462px;line-height:15px;height:15px;font-size:13px;color:#e6e6e6;-webkit-text-stroke:0.45px;left:131.42px;transform-origin:0 50%;transform:scaleX(0.9397);">Elements</div>
<div class="t" style="top:491px;line-height:16px;height:16px;font-size:15px;color:#f0922a;font-weight:700;font-family:'Liberation Serif',serif;left:45px;font-style:italic;">f</div>
<div class="t" style="top:491px;line-height:16px;height:16px;font-size:15px;color:#f0922a;font-weight:700;font-family:'Liberation Serif',serif;left:50.6px;font-style:italic;">x</div>
<div class="t" style="top:495px;line-height:10px;height:10px;font-size:8.5px;color:#e0e0e0;left:147px;">Fx</div>
<div class="t" style="top:522px;line-height:14px;height:14px;font-size:12px;color:#f4f4f4;left:46.62px;transform-origin:0 50%;transform:scaleX(1.0035);">data</div>
<div class="t" style="top:546px;line-height:14px;height:14px;font-size:12px;color:#f4f4f4;left:78.71px;transform-origin:0 50%;transform:scaleX(0.9826);">Cost</div>
<div class="t" style="top:570px;line-height:14px;height:14px;font-size:12px;color:#f4f4f4;left:78.41px;transform-origin:0 50%;transform:scaleX(0.9287);">Expenses</div>
<div class="t" style="top:594px;line-height:14px;height:14px;font-size:12px;color:#f4f4f4;left:78.28px;transform-origin:0 50%;transform:scaleX(1.0645);">Margin</div>
<div class="t" style="top:618px;line-height:14px;height:14px;font-size:12px;color:#f4f4f4;left:78.55px;transform-origin:0 50%;transform:scaleX(1.0376);">net margin</div>
<div class="t" style="top:642px;line-height:14px;height:14px;font-size:12px;color:#f4f4f4;left:78.53px;transform-origin:0 50%;transform:scaleX(1.0727);">net profit</div>
<div class="t" style="top:668px;line-height:14px;height:14px;font-size:12px;color:#f4f4f4;left:46.54px;transform-origin:0 50%;transform:scaleX(1.0044);">Public Content</div>
<div class="t" style="top:689px;line-height:16px;height:16px;font-size:15px;color:#f0922a;font-weight:700;font-family:'Liberation Serif',serif;left:47px;font-style:italic;">f</div>
<div class="t" style="top:690px;line-height:15px;height:15px;font-size:14px;color:#f0922a;font-weight:700;font-family:'Liberation Serif',serif;left:54.2px;font-style:italic;">x</div>
<div class="t" style="top:692px;line-height:14px;height:14px;font-size:12px;color:#f4f4f4;left:66.58px;transform-origin:0 50%;transform:scaleX(0.9606);">Exponential Regression Exp...</div>
<div style="left:0px;top:655px;width:244px;height:5px;background:#2a2a2a;"></div>
<svg class="ov" width="1368" height="834" viewBox="0 0 1368 834" >
<path d="M97 657.6 H147 M97 659.8 H147" stroke="#e8e8e8" stroke-width="0.9"/>
</svg>
<div style="left:280px;top:114px;width:17.7px;height:18px;background:#555555;"></div>
<div style="left:297.4px;top:114px;width:17.7px;height:18px;background:#5e7480;"></div>
<div style="left:314.8px;top:114px;width:17.7px;height:18px;background:#585c62;"></div>
<div style="left:332.2px;top:114px;width:17.7px;height:18px;background:#5c5352;"></div>
<div style="left:349.6px;top:114px;width:17.7px;height:18px;background:#5a5958;"></div>
<div style="left:367.0px;top:114px;width:17.7px;height:18px;background:#5c5455;"></div>
<div style="left:384.4px;top:114px;width:17.7px;height:18px;background:#666a68;"></div>
<div style="left:401.8px;top:114px;width:17.7px;height:18px;background:#6e6a58;"></div>
<div style="left:419.2px;top:114px;width:17.7px;height:18px;background:#666c6e;"></div>
<div style="left:436.6px;top:114px;width:15.3px;height:18px;background:#5a5a5a;"></div>
<div class="t" style="top:116px;line-height:14px;height:14px;font-size:12px;color:#f0f0f0;left:453.43px;transform-origin:0 50%;transform:scaleX(0.9866);">SampleDemo</div>
<div class="t" style="top:117px;line-height:14px;height:14px;font-size:12.5px;color:#e6e6e6;-webkit-text-stroke:0.45px;left:582.03px;transform-origin:0 50%;transform:scaleX(0.9727);">Plotted - Sales by ProdCat (Color Fill)</div>
<div style="left:252px;top:146px;width:30px;height:30px;background:#2a2a2a;border:1px solid #747474;border-radius:5px;"></div>
<div style="left:252px;top:564px;width:30px;height:30px;background:#2a2a2a;border:1px solid #747474;border-radius:5px;"></div>
<div style="left:252px;top:299px;width:30px;height:1px;background:#2a2a2a;"></div>
<div style="left:252px;top:754px;width:30px;height:1px;background:#2a2a2a;"></div>
<svg class="ov" width="1368" height="834" viewBox="0 0 1368 834" >
<circle cx="269.7" cy="122" r="7.6" fill="none" stroke="#5aa3d6" stroke-width="1.2"/><rect x="268.9" y="120.6" width="1.7" height="5" fill="#f0f0f0"/><rect x="268.9" y="117.6" width="1.7" height="1.8" fill="#f0f0f0"/>
<path d="M263.2 153.2 V166.6 L266.5 163.6 L268.9 169 L271.1 168 L268.8 162.8 L273 162.6 Z" fill="#cccccc"/>
<path d="M266 190.2 V201 M260.4 195.6 H271.6" stroke="#cccccc" stroke-width="1.1"/><path d="M268.4 198.4 V206.2 L274.8 202.3 Z" fill="#cccccc"/>
<rect x="259.6" y="227.6" width="14.8" height="14.8" fill="none" stroke="#cccccc" stroke-width="1" stroke-dasharray="2.6 1.8"/><path d="M264.2 233.2 L276.2 235 L271.6 237.8 L269.8 243.6 Z" fill="#cccccc" stroke="#484848" stroke-width="0.5"/>
<path d="M261.4 264.6 V276.4 L265 273 L272 272.6 Z" fill="#cccccc"/><rect x="265.2" y="274.4" width="2.4" height="2.4" fill="#e0604a"/><rect x="268.6" y="274.4" width="2.4" height="2.4" fill="#4a90d0"/><rect x="265.2" y="277.8" width="2.4" height="2.4" fill="#3cb8a0"/><rect x="268.6" y="277.8" width="2.4" height="2.4" fill="#f0a030"/>
<path d="M260 313 V327.6 M263 313.6 H275" stroke="#cccccc" stroke-width="1.4"/>
<path d="M262.6 316.8 H275.4" stroke="#cccccc" stroke-width="1.6" stroke-dasharray="2 1.2"/>
<path d="M262.6 320.2 H275.4" stroke="#cccccc" stroke-width="1.6" stroke-dasharray="2 1.2"/>
<path d="M262.6 323.6 H275.4" stroke="#cccccc" stroke-width="1.6" stroke-dasharray="2 1.2"/>
<path d="M262.6 327.0 H275.4" stroke="#cccccc" stroke-width="1.6" stroke-dasharray="2 1.2"/>
<path d="M278.2 330 v-4.8 l-4.8 4.8z" fill="#a8a8a8"/>
<rect x="259" y="349.3" width="1.8" height="15.399999999999977" fill="#cccccc"/>
<rect x="262.8" y="353.6" width="2.3" height="11.099999999999966" fill="#cccccc"/>
<rect x="266.1" y="351.6" width="2.4" height="13.099999999999966" fill="#cccccc"/>
<rect x="269.5" y="352.6" width="2.3" height="12.099999999999966" fill="#cccccc"/>
<rect x="272.8" y="357.4" width="2" height="7.300000000000011" fill="#cccccc"/>
<path d="M278.2 367 v-4.8 l-4.8 4.8z" fill="#a8a8a8"/>
<rect x="258.8" y="386" width="16.2" height="2" fill="#cccccc"/>
<rect x="258.8" y="389.3" width="10.2" height="2" fill="#cccccc"/>
<rect x="258.8" y="392.6" width="12.6" height="2" fill="#cccccc"/>
<rect x="258.8" y="395.9" width="14.1" height="2" fill="#cccccc"/>
<rect x="258.8" y="399.3" width="6.8" height="2" fill="#cccccc"/>
<path d="M278.2 404 v-4.8 l-4.8 4.8z" fill="#a8a8a8"/>
<path d="M259.4 430 Q263 424.4 267 428.6 T274.8 425.4 M259.4 436.8 Q263 431 267 435.4 T274.8 432.2" fill="none" stroke="#cccccc" stroke-width="1.1"/>
<path d="M278.2 441 v-4.8 l-4.8 4.8z" fill="#a8a8a8"/>
<path d="M259 475 V462 L262 465.6 L265 463.6 L268 467 L271 464.8 L273.4 466.4 L275 462.4 V475 Z" fill="#f4f4f4"/><path d="M259 475 V468 L262 469.6 L265.4 467.8 L268 470.6 L271.4 468 L275 468.8 V475 Z" fill="#bcbcbc"/>
<path d="M278.2 478 v-4.8 l-4.8 4.8z" fill="#a8a8a8"/>
<path d="M266.4 505.6 V497.8 A7.8 7.8 0 1 0 274.2 505.6 Z" fill="#cccccc"/><path d="M268 504 V497 A7 7 0 0 1 275 504 Z" fill="#cccccc"/>
<path d="M278.2 515 v-4.8 l-4.8 4.8z" fill="#a8a8a8"/>
<polygon points="267.0,534.4 274.8,540.1 271.8,549.2 262.2,549.2 259.2,540.1" fill="none" stroke="#a8a8a8" stroke-width="0.8"/><polygon points="267.0,537.6 271.8,541.1 269.9,546.6 264.1,546.6 262.2,541.1" fill="none" stroke="#a8a8a8" stroke-width="0.7"/><polygon points="267.0,540.2 269.3,541.9 268.4,544.5 265.6,544.5 264.7,541.9" fill="none" stroke="#a8a8a8" stroke-width="0.7"/>
<path d="M267 542.6 L267.0 534.4" stroke="#a8a8a8" stroke-width="0.6"/>
<path d="M267 542.6 L274.8 540.1" stroke="#a8a8a8" stroke-width="0.6"/>
<path d="M267 542.6 L271.8 549.2" stroke="#a8a8a8" stroke-width="0.6"/>
<path d="M267 542.6 L262.2 549.2" stroke="#a8a8a8" stroke-width="0.6"/>
<path d="M267 542.6 L259.2 540.1" stroke="#a8a8a8" stroke-width="0.6"/>
<polygon points="267.0,534.4 271.8,549.2 259.2,540.1 274.8,540.1 262.2,549.2" fill="none" stroke="#a0a0a0" stroke-width="0.6"/>
<path d="M278.2 552 v-4.8 l-4.8 4.8z" fill="#a8a8a8"/>
<circle cx="262.2" cy="577.6" r="2.3" fill="#cccccc"/>
<circle cx="271.4" cy="574.7" r="2.9" fill="#cccccc"/>
<circle cx="267.4" cy="582" r="1.9" fill="#cccccc"/>
<circle cx="263.2" cy="585.3" r="1.5" fill="#cccccc"/>
<circle cx="272.4" cy="583.7" r="1" fill="#cccccc"/>
<path d="M278.2 589 v-4.8 l-4.8 4.8z" fill="#a8a8a8"/>
<rect x="259.3" y="608.2" width="6.4" height="15.3" fill="#cccccc"/><rect x="266.6" y="608.2" width="3.6" height="9.6" fill="#cccccc"/><rect x="271" y="608.2" width="4" height="4.4" fill="#cccccc"/><rect x="271" y="613.4" width="1.8" height="4.4" fill="#cccccc"/><rect x="273.4" y="613.4" width="1.6" height="2" fill="#cccccc"/><rect x="273.4" y="616" width="1.6" height="1.8" fill="#cccccc"/><rect x="266.6" y="618.6" width="8.4" height="4.9" fill="#cccccc"/>
<path d="M278.2 626 v-4.8 l-4.8 4.8z" fill="#a8a8a8"/>
<path d="M259.5 656.2 A7.4 7.4 0 0 1 274.3 656.2" fill="none" stroke="#dadada" stroke-width="2" stroke-dasharray="5.4 2.8 100"/><path d="M262.6 649.9 L269.7 656.2 A2.2 2.2 0 1 1 265.7 658.4 Z" fill="#dadada"/>
<path d="M278.2 663 v-4.8 l-4.8 4.8z" fill="#a8a8a8"/>
<circle cx="267" cy="689.8" r="7.4" fill="#cccccc"/><path d="M259.6 689.8 H274.4 M260.6 686 H273.4 M260.6 693.6 H273.4 M267 682.4 V697.2 M263.6 683 Q261.4 689.8 263.6 696.6 M270.4 683 Q272.6 689.8 270.4 696.6" fill="none" stroke="#484848" stroke-width="0.7"/>
<path d="M278.2 700 v-4.8 l-4.8 4.8z" fill="#a8a8a8"/>
<path d="M259.8 733 V719.2 H274.8 V727" fill="none" stroke="#cccccc" stroke-width="1.1"/><path d="M259.8 733 V726 L262.6 724.4 L265 728 V733 Z" fill="#cccccc"/><path d="M267.6 728 L265.6 730.6 L267.6 733.2 M271.4 728 L273.4 730.6 L271.4 733.2" fill="none" stroke="#cccccc" stroke-width="0.9"/>
<path d="M278.2 737 v-4.8 l-4.8 4.8z" fill="#a8a8a8"/>
<path d="M268.6 770.4 Q270.168 774.432 274.20000000000005 776 Q270.168 777.568 268.6 781.6 Q267.03200000000004 777.568 263.0 776 Q267.03200000000004 774.432 268.6 770.4Z" fill="#e8e8e8"/><path d="M262.4 767.8 Q263.01599999999996 769.384 264.59999999999997 770 Q263.01599999999996 770.616 262.4 772.2 Q261.784 770.616 260.2 770 Q261.784 769.384 262.4 767.8Z" fill="#e8e8e8"/><path d="M262.6 779.6 Q263.10400000000004 780.896 264.40000000000003 781.4 Q263.10400000000004 781.904 262.6 783.1999999999999 Q262.096 781.904 260.8 781.4 Q262.096 780.896 262.6 779.6Z" fill="#e8e8e8"/>
<path d="M278.2 786 v-4.8 l-4.8 4.8z" fill="#a8a8a8"/>
<path d="M937.6 129.6 A11 11 0 0 0 926.6 118.6 M933.4 129.6 A6.8 6.8 0 0 0 926.6 122.8" fill="none" stroke="#d2d2d2" stroke-width="1.1" transform="translate(11.6,0)"/>
<rect x="961" y="120.4" width="16.2" height="7.6" rx="1.4" fill="#d2d2d2"/><rect x="964.2" y="116.4" width="9.8" height="3.4" fill="none" stroke="#d2d2d2" stroke-width="1.1"/><rect x="964.4" y="125.4" width="9.4" height="5" fill="#484848" stroke="#d2d2d2" stroke-width="1.1"/>
<g fill="none" stroke="#d2d2d2" stroke-width="1"><circle cx="991.8" cy="122.4" r="2.7"/><circle cx="1002.2" cy="118" r="2.7"/><circle cx="1002.2" cy="126.8" r="2.7"/><path d="M994.4 121.3 L999.8 119 M994.4 123.5 L999.8 125.8"/></g>
<path d="M1047.4 117.4 L1059 129 M1059 117.4 L1047.4 129" stroke="#d2d2d2" stroke-width="1.1"/>
</svg>
<div class="t" style="top:114px;line-height:17px;height:17px;font-size:15px;color:#e8e8e8;font-weight:700;left:1020.8px;">?</div>
<div class="t" style="top:144px;line-height:14px;height:14px;font-size:12px;color:#808892;left:293px;">Manufacturer Expenses, Exponential Regression Expenses | Cost</div>
<div style="left:343px;top:165px;width:540px;height:1px;background:#e6e6e6;"></div>
<div style="left:343px;top:266px;width:540px;height:1px;background:#e6e6e6;"></div>
<div style="left:343px;top:368px;width:540px;height:1px;background:#e6e6e6;"></div>
<div style="left:343px;top:471px;width:540px;height:1px;background:#e6e6e6;"></div>
<div style="left:343px;top:573px;width:540px;height:1px;background:#e6e6e6;"></div>
<div style="left:343px;top:675px;width:540px;height:1px;background:#e6e6e6;"></div>
<div style="left:342px;top:165px;width:1px;height:613px;background:#d2d2d2;"></div>
<div style="left:342px;top:777px;width:541px;height:2px;background:#d2d2d2;"></div>
<div class="t" style="top:158px;line-height:11px;height:11px;font-size:10px;color:#7a7a7a;left:-260px;width:600px;text-align:right;">1.10M</div>
<div class="t" style="top:260px;line-height:11px;height:11px;font-size:10px;color:#7a7a7a;left:-260px;width:600px;text-align:right;">1.05M</div>
<div class="t" style="top:362px;line-height:11px;height:11px;font-size:10px;color:#7a7a7a;left:-260px;width:600px;text-align:right;">1.00M</div>
<div class="t" style="top:465px;line-height:11px;height:11px;font-size:10px;color:#7a7a7a;left:-260px;width:600px;text-align:right;">950.00K</div>
<div class="t" style="top:567px;line-height:11px;height:11px;font-size:10px;color:#7a7a7a;left:-260px;width:600px;text-align:right;">900.00K</div>
<div class="t" style="top:669px;line-height:11px;height:11px;font-size:10px;color:#7a7a7a;left:-260px;width:600px;text-align:right;">850.00K</div>
<div class="t" style="top:767px;line-height:11px;height:11px;font-size:10px;color:#7a7a7a;left:-260px;width:600px;text-align:right;">800.00K</div>
<div class="t" style="top:779px;line-height:11px;height:11px;font-size:10px;color:#7a7a7a;left:151px;width:600px;text-align:center;">$560.00</div>
<div class="t" style="top:779px;line-height:11px;height:11px;font-size:10px;color:#7a7a7a;left:259px;width:600px;text-align:center;">$580.00</div>
<div class="t" style="top:779px;line-height:11px;height:11px;font-size:10px;color:#7a7a7a;left:367px;width:600px;text-align:center;">$600.00</div>
<div class="t" style="top:779px;line-height:11px;height:11px;font-size:10px;color:#7a7a7a;left:475px;width:600px;text-align:center;">$620.00</div>
<div class="t" style="top:779px;line-height:11px;height:11px;font-size:10px;color:#7a7a7a;left:343.4px;">$540.00</div>
<div class="t" style="top:779px;line-height:11px;height:11px;font-size:10px;color:#7a7a7a;left:283px;width:600px;text-align:right;">$640.00</div>
<svg class="ov" width="1368" height="834" viewBox="0 0 1368 834" >
<circle cx="857.5" cy="251.1" r="6" fill="#9bd3ea" stroke="#45aadc" stroke-width="1.3"/>
<circle cx="679.1" cy="324.2" r="6" fill="#9bd3ea" stroke="#45aadc" stroke-width="1.3"/>
<circle cx="515" cy="395" r="6" fill="#9bd3ea" stroke="#45aadc" stroke-width="1.3"/>
<circle cx="733.7" cy="485.2" r="6" fill="#9bd3ea" stroke="#45aadc" stroke-width="1.3"/>
<circle cx="623.8" cy="494.3" r="6" fill="#9bd3ea" stroke="#45aadc" stroke-width="1.3"/>
<circle cx="541" cy="502.6" r="6" fill="#9bd3ea" stroke="#45aadc" stroke-width="1.3"/>
<circle cx="531.4" cy="523.4" r="6" fill="#9bd3ea" stroke="#45aadc" stroke-width="1.3"/>
<circle cx="488.8" cy="643" r="6" fill="#9bd3ea" stroke="#45aadc" stroke-width="1.3"/>
<circle cx="566.1" cy="646.4" r="6" fill="#9bd3ea" stroke="#45aadc" stroke-width="1.3"/>
<circle cx="467.4" cy="676" r="6" fill="#9bd3ea" stroke="#45aadc" stroke-width="1.3"/>
<circle cx="410.6" cy="760.7" r="6" fill="#9bd3ea" stroke="#45aadc" stroke-width="1.3"/>
<path d="M410.9 680.9 L419.8 673.1 L428.8 665.3 L437.7 657.4 L446.7 649.5 L455.6 641.6 L464.5 633.6 L473.5 625.6 L482.4 617.5 L491.3 609.4 L500.3 601.3 L509.2 593.2 L518.2 585.0 L527.1 576.7 L536.0 568.5 L545.0 560.2 L553.9 551.8 L562.8 543.4 L571.8 535.0 L580.7 526.6 L589.7 518.1 L598.6 509.5 L607.5 501.0 L616.5 492.3 L625.4 483.7 L634.3 475.0 L643.3 466.3 L652.2 457.5 L661.2 448.7 L670.1 439.8 L679.0 431.0 L688.0 422.0 L696.9 413.1 L705.9 404.1 L714.8 395.0 L723.7 385.9 L732.7 376.8 L741.6 367.6 L750.5 358.4 L759.5 349.1 L768.4 339.8 L777.4 330.5 L786.3 321.1 L795.2 311.7 L804.2 302.2 L813.1 292.7 L822.0 283.2 L831.0 273.6 L839.9 263.9 L848.9 254.3 L857.8 244.5" stroke="#f4ce5a" stroke-width="1.3" stroke-dasharray="8.5 4.4" fill="none"/>
</svg>
<div class="t" style="top:245px;line-height:12px;height:12px;font-size:11px;color:#9a9a9a;left:241.5px;width:600px;text-align:right;">Over Armour</div>
<div class="t" style="top:306px;line-height:12px;height:12px;font-size:11px;color:#9a9a9a;left:379.1px;width:600px;text-align:center;">Ribuck</div>
<div class="t" style="top:377px;line-height:12px;height:12px;font-size:11px;color:#9a9a9a;left:215px;width:600px;text-align:center;">Woolson</div>
<div class="t" style="top:467px;line-height:12px;height:12px;font-size:11px;color:#9a9a9a;left:433.70000000000005px;width:600px;text-align:center;">Nuke</div>
<div class="t" style="top:476px;line-height:12px;height:12px;font-size:11px;color:#9a9a9a;left:323.79999999999995px;width:600px;text-align:center;">Slicenger</div>
<div class="t" style="top:485px;line-height:12px;height:12px;font-size:11px;color:#9a9a9a;left:241px;width:600px;text-align:center;">Poomah</div>
<div class="t" style="top:505px;line-height:12px;height:12px;font-size:11px;color:#9a9a9a;left:231.39999999999998px;width:600px;text-align:center;">Acme</div>
<div class="t" style="top:625px;line-height:12px;height:12px;font-size:11px;color:#9a9a9a;left:188.8px;width:600px;text-align:center;">Adihash</div>
<div class="t" style="top:628px;line-height:12px;height:12px;font-size:11px;color:#9a9a9a;left:266.1px;width:600px;text-align:center;">Princess</div>
<div class="t" style="top:659px;line-height:12px;height:12px;font-size:11px;color:#9a9a9a;left:167.39999999999998px;width:600px;text-align:center;">Esics</div>
<div class="t" style="top:743px;line-height:12px;height:12px;font-size:11px;color:#9a9a9a;left:110.60000000000002px;width:600px;text-align:center;">Old Balance</div>
<div style="left:886px;top:141px;width:1px;height:652px;background:#e2e2e2;"></div>
<div style="left:887px;top:243px;width:180px;height:1px;background:#e2e2e2;"></div>
<div style="left:897px;top:171px;width:10px;height:9.5px;background:#3aa8dc;border-radius:2.4px;"></div>
<div style="left:897px;top:186.6px;width:10px;height:9.5px;background:#f4c534;border-radius:2.4px;"></div>
<div class="t" style="top:169px;line-height:14px;height:14px;font-size:12px;color:#8c8c8c;left:909.41px;transform-origin:0 50%;transform:scaleX(0.9248);">Expenses</div>
<div class="t" style="top:185px;line-height:14px;height:14px;font-size:12px;color:#8c8c8c;left:909.38px;transform-origin:0 50%;transform:scaleX(0.9563);">Exponential Regression Ex...</div>
<div style="left:1052px;top:151px;width:3px;height:3px;background:#7f92a6;"></div>
<div style="left:1052px;top:157px;width:3px;height:3px;background:#7f92a6;"></div>
<div style="left:1052px;top:163px;width:3px;height:3px;background:#7f92a6;"></div>
<div class="t" style="top:249px;line-height:14px;height:14px;font-size:12px;color:#8c8c8c;font-weight:700;left:894px;">Regression</div>
<div style="left:900.5px;top:280px;width:19.5px;height:1.2px;background:repeating-linear-gradient(90deg,#3aa8dc 0,#3aa8dc 3.4px,transparent 3.4px,transparent 5.4px);"></div>
<div class="t" style="top:275px;line-height:12px;height:12px;font-size:11.5px;color:#505050;-webkit-text-stroke:0.45px;left:924.38px;transform-origin:0 50%;transform:scaleX(1.0024);">Exponential Regressio...</div>
<div class="t" style="top:291px;line-height:14px;height:14px;font-size:12px;color:#8c8c8c;left:899.0px;transform-origin:0 50%;transform:scaleX(0.9936);">y=1.9e+5e^0.0027x | R&sup2;=0....</div>
<div style="left:1070px;top:139px;width:265px;height:655px;background:#484848;"></div>
<div style="left:1070px;top:138px;width:265px;height:1px;background:#363636;"></div>
<div class="t" style="top:116px;line-height:15px;height:15px;font-size:13px;color:#e6e6e6;-webkit-text-stroke:0.45px;left:1076.81px;transform-origin:0 50%;transform:scaleX(0.9514);">Drop Zones</div>
<div class="t" style="top:115px;line-height:17px;height:17px;font-size:15px;color:#e8e8e8;font-weight:700;left:1294.2px;">?</div>
<div style="left:1325.3px;top:160px;width:7.4px;height:613px;background:#5c5c5c;border-radius:3.5px;"></div>
<div style="left:1325.3px;top:160px;width:7.4px;height:598px;background:#6c6c6c;border-radius:3.5px;"></div>
<div style="left:1081px;top:150px;width:233px;height:90px;background:#555555;border:1px solid #262626;border-radius:7px;"></div>
<div style="left:1088px;top:181px;width:219px;height:24px;background:#d08042;border:1px solid #b5621f;border-radius:12px;"></div>
<div style="left:1081px;top:243px;width:233px;height:105px;background:#555555;border:1px solid #262626;border-radius:7px;"></div>
<div style="left:1088px;top:274px;width:219px;height:24px;background:#d08042;border:1px solid #b5621f;border-radius:12px;"></div>
<div style="left:1088px;top:302px;width:219px;height:24px;background:#d08042;border:1px solid #b5621f;border-radius:12px;background:linear-gradient(90deg,#b4501c 0,#b4501c 20.5px,#d08042 20.5px);"></div>
<div style="left:1081px;top:351px;width:233px;height:90px;background:#555555;border:1px solid #262626;border-radius:7px;"></div>
<div style="left:1088px;top:382px;width:219px;height:24px;background:#33699c;border:1px solid #28558a;border-radius:12px;"></div>
<div style="left:1081px;top:444px;width:233px;height:104px;background:#555555;border:1px solid #262626;border-radius:7px;"></div>
<div style="left:1088px;top:475px;width:219px;height:24px;background:#d08042;border:1px solid #b5621f;border-radius:12px;"></div>
<div style="left:1088px;top:503px;width:219px;height:24px;background:#d08042;border:1px solid #b5621f;border-radius:12px;background:linear-gradient(90deg,#b4501c 0,#b4501c 20.5px,#d08042 20.5px);"></div>
<div style="left:1081px;top:551px;width:233px;height:28px;background:#484848;border:1px solid #262626;border-radius:7px;"></div>
<div style="left:1081px;top:582px;width:233px;height:28px;background:#484848;border:1px solid #262626;border-radius:7px;"></div>
<div style="left:1081px;top:613px;width:233px;height:28px;background:#484848;border:1px solid #262626;border-radius:7px;"></div>
<div style="left:1081px;top:644px;width:233px;height:28px;background:#484848;border:1px solid #262626;border-radius:7px;"></div>
<div style="left:1081px;top:675px;width:233px;height:28px;background:#484848;border:1px solid #262626;border-radius:7px;"></div>
<div style="left:1081px;top:706px;width:233px;height:28px;background:#484848;border:1px solid #262626;border-radius:7px;"></div>
<div style="left:1081px;top:737px;width:233px;height:28px;background:#484848;border:1px solid #262626;border-radius:7px;"></div>
<div style="left:1081px;top:768px;width:233px;height:28px;background:#484848;border:1px solid #262626;border-radius:7px;"></div>
<svg class="ov" width="1368" height="834" viewBox="0 0 1368 834" >
<rect x="1297.9" y="157.4" width="3.2" height="3" fill="#e8e8e8"/>
<rect x="1297.9" y="163.2" width="3.2" height="3" fill="#e8e8e8"/>
<rect x="1297.9" y="169.0" width="3.2" height="3" fill="#e8e8e8"/>
<rect x="1297.9" y="250.4" width="3.2" height="3" fill="#e8e8e8"/>
<rect x="1297.9" y="256.2" width="3.2" height="3" fill="#e8e8e8"/>
<rect x="1297.9" y="262.0" width="3.2" height="3" fill="#e8e8e8"/>
<rect x="1297.9" y="358.4" width="3.2" height="3" fill="#e8e8e8"/>
<rect x="1297.9" y="364.2" width="3.2" height="3" fill="#e8e8e8"/>
<rect x="1297.9" y="370.0" width="3.2" height="3" fill="#e8e8e8"/>
<rect x="1297.9" y="451.4" width="3.2" height="3" fill="#e8e8e8"/>
<rect x="1297.9" y="457.2" width="3.2" height="3" fill="#e8e8e8"/>
<rect x="1297.9" y="463.0" width="3.2" height="3" fill="#e8e8e8"/>
<rect x="1297.9" y="558.5" width="3.2" height="3" fill="#e8e8e8"/>
<rect x="1297.9" y="564.3" width="3.2" height="3" fill="#e8e8e8"/>
<rect x="1297.9" y="570.1" width="3.2" height="3" fill="#e8e8e8"/>
<rect x="1297.9" y="589.5" width="3.2" height="3" fill="#e8e8e8"/>
<rect x="1297.9" y="595.3" width="3.2" height="3" fill="#e8e8e8"/>
<rect x="1297.9" y="601.1" width="3.2" height="3" fill="#e8e8e8"/>
<rect x="1297.9" y="620.5" width="3.2" height="3" fill="#e8e8e8"/>
<rect x="1297.9" y="626.3" width="3.2" height="3" fill="#e8e8e8"/>
<rect x="1297.9" y="632.1" width="3.2" height="3" fill="#e8e8e8"/>
<rect x="1297.9" y="651.5" width="3.2" height="3" fill="#e8e8e8"/>
<rect x="1297.9" y="657.3" width="3.2" height="3" fill="#e8e8e8"/>
<rect x="1297.9" y="663.1" width="3.2" height="3" fill="#e8e8e8"/>
<rect x="1297.9" y="682.5" width="3.2" height="3" fill="#e8e8e8"/>
<rect x="1297.9" y="688.3" width="3.2" height="3" fill="#e8e8e8"/>
<rect x="1297.9" y="694.1" width="3.2" height="3" fill="#e8e8e8"/>
<rect x="1297.9" y="713.5" width="3.2" height="3" fill="#e8e8e8"/>
<rect x="1297.9" y="719.3" width="3.2" height="3" fill="#e8e8e8"/>
<rect x="1297.9" y="725.1" width="3.2" height="3" fill="#e8e8e8"/>
<rect x="1297.9" y="744.5" width="3.2" height="3" fill="#e8e8e8"/>
<rect x="1297.9" y="750.3" width="3.2" height="3" fill="#e8e8e8"/>
<rect x="1297.9" y="756.1" width="3.2" height="3" fill="#e8e8e8"/>
<rect x="1297.9" y="775.5" width="3.2" height="3" fill="#e8e8e8"/>
<rect x="1297.9" y="781.3" width="3.2" height="3" fill="#e8e8e8"/>
<rect x="1297.9" y="787.1" width="3.2" height="3" fill="#e8e8e8"/>
<path d="M1082 265.0 V269.8 H1086.8 Z" fill="#a8a8a8"/>
<path d="M1082 466.0 V470.8 H1086.8 Z" fill="#a8a8a8"/>
<path d="M1082 573.0 V577.8 H1086.8 Z" fill="#a8a8a8"/>
<path d="M1082 666.0 V670.8 H1086.8 Z" fill="#a8a8a8"/>
<path d="M1082 697.0 V701.8 H1086.8 Z" fill="#a8a8a8"/>
<path d="M1292.4 189.2 l7.4 7.4 m0 -7.4 l-7.4 7.4" stroke="#fff" stroke-width="1.2" fill="none"/>
<path d="M1292.4 282.4 l7.4 7.4 m0 -7.4 l-7.4 7.4" stroke="#fff" stroke-width="1.2" fill="none"/>
<path d="M1292.4 310.4 l7.4 7.4 m0 -7.4 l-7.4 7.4" stroke="#fff" stroke-width="1.2" fill="none"/>
<path d="M1292.4 390.2 l7.4 7.4 m0 -7.4 l-7.4 7.4" stroke="#fff" stroke-width="1.2" fill="none"/>
<path d="M1292.4 483.4 l7.4 7.4 m0 -7.4 l-7.4 7.4" stroke="#fff" stroke-width="1.2" fill="none"/>
<path d="M1292.4 511.4 l7.4 7.4 m0 -7.4 l-7.4 7.4" stroke="#fff" stroke-width="1.2" fill="none"/>
<rect x="1093" y="192.2" width="2.9" height="5.6" fill="#fff"/><rect x="1097.1" y="190.1" width="2.9" height="7.7" fill="#fff"/><rect x="1101.2" y="188.1" width="2.9" height="9.7" fill="#fff"/>
<rect x="1093" y="285.4" width="2.9" height="5.6" fill="#fff"/><rect x="1097.1" y="283.3" width="2.9" height="7.7" fill="#fff"/><rect x="1101.2" y="281.3" width="2.9" height="9.7" fill="#fff"/>
<rect x="1093" y="313.4" width="2.9" height="5.6" fill="#fff"/><rect x="1097.1" y="311.3" width="2.9" height="7.7" fill="#fff"/><rect x="1101.2" y="309.3" width="2.9" height="9.7" fill="#fff"/>
<rect x="1093" y="486.4" width="2.9" height="5.6" fill="#fff"/><rect x="1097.1" y="484.3" width="2.9" height="7.7" fill="#fff"/><rect x="1101.2" y="482.3" width="2.9" height="9.7" fill="#fff"/>
<rect x="1093" y="514.4" width="2.9" height="5.6" fill="#fff"/><rect x="1097.1" y="512.3" width="2.9" height="7.7" fill="#fff"/><rect x="1101.2" y="510.3" width="2.9" height="9.7" fill="#fff"/>
<rect x="1096.4" y="389.4" width="2.8" height="2.8" fill="#fff"/>
<rect x="1100.2" y="389.4" width="2.8" height="2.8" fill="#fff"/>
<rect x="1096.4" y="393.3" width="2.8" height="2.8" fill="#fff"/>
<rect x="1100.2" y="393.3" width="2.8" height="2.8" fill="#fff"/>
<rect x="1096.4" y="397.2" width="2.8" height="2.8" fill="#fff"/>
<rect x="1100.2" y="397.2" width="2.8" height="2.8" fill="#fff"/>
<path d="M1318.2 118.2 L1323.4 123.5 L1318.2 128.8" fill="none" stroke="#e0e0e0" stroke-width="1.2"/>
<path d="M1354.4 118.6 L1348.8 123.9 L1354.4 129.2" fill="none" stroke="#e0e0e0" stroke-width="1.2"/>
<path d="M1088.4 167.4 H1102 M1088.4 165.8 V169 M1102 165.8 V169" stroke="#d0d0d0" stroke-width="0.9" fill="none"/>
<path d="M1098.6 250.9 V262.1 M1097.1 250.9 H1100.1 M1097.1 262.1 H1100.1" stroke="#d0d0d0" stroke-width="0.9" fill="none"/>
<rect x="1089.4" y="359.6" width="11.4" height="10.4" rx="1" fill="none" stroke="#b4b878" stroke-width="1"/><path d="M1091.8 362.6 H1098.4 M1091.8 364.8 H1098.4 M1091.8 367 H1096" stroke="#b4b878" stroke-width="0.9"/>
<circle cx="1095.4" cy="452.6" r="1.7" fill="#9b6fd0"/>
<circle cx="1091" cy="456.4" r="1.7" fill="#e0a050"/>
<circle cx="1099.6" cy="456.4" r="1.7" fill="#5a90d0"/>
<circle cx="1092.6" cy="461.4" r="1.7" fill="#58a890"/>
<circle cx="1098.4" cy="461.4" r="1.7" fill="#e06848"/>
<rect x="1088.8" y="563.2" width="8.2" height="8.2" fill="none" stroke="#4fb0b8" stroke-width="1"/><path d="M1093.4 563 A4.4 4.4 0 1 1 1097.2 567" fill="none" stroke="#4fb0b8" stroke-width="1"/>
<path d="M1089 592.5 H1100 M1089 596 H1100 M1089 599.4 H1100 M1091.8 590.2 V601.2" stroke="#6ec8a8" stroke-width="1" fill="none"/>
<path d="M1092.8 621.6 V631.6 M1096 621.6 V631.6 M1099.2 621.6 V631.6 M1090.2 629.2 H1101.2" stroke="#6ec8a8" stroke-width="1" fill="none"/>
<path d="M1089.4 653 H1101 L1095.8 658.4 V662.8 H1094.6 V658.4 Z" fill="none" stroke="#d680d6" stroke-width="1.1"/>
<rect x="1088.8" y="685.6" width="6.4" height="8" fill="none" stroke="#d09850" stroke-width="1"/><rect x="1095.2" y="689.4" width="4.6" height="4.2" fill="none" stroke="#d09850" stroke-width="1"/><rect x="1098.2" y="683.8" width="2" height="2" fill="none" stroke="#d09850" stroke-width="0.8"/>
<path d="M1088.6 720.4 L1094.4 714.8 H1100.6 V720.6 L1094.6 726 Z" fill="none" stroke="#d87878" stroke-width="1" transform="rotate(0)"/><circle cx="1094.6" cy="720.6" r="0.9" fill="#d87878"/>
<path d="M1089 745.4 H1100.6 V753 H1097.8 V755.6 L1095 753 H1089 Z" fill="none" stroke="#e08878" stroke-width="1"/>
<circle cx="1094.6" cy="782.4" r="7" fill="none" stroke="#a070c8" stroke-width="1"/><path d="M1092.6 779 L1098 782.4 L1092.6 785.8Z" fill="#a070c8"/>
</svg>
<div class="t" style="top:156px;line-height:12px;height:12px;font-size:10.5px;color:#d8d8d8;left:1091.8px;">X</div>
<div class="t" style="top:248px;line-height:12px;height:12px;font-size:11.5px;color:#d0d0d0;left:1089.8px;">y</div>
<div class="t" style="top:157px;line-height:15px;height:15px;font-size:13px;color:#e8e8e8;-webkit-text-stroke:0.45px;left:1112.56px;transform-origin:0 50%;transform:scaleX(0.9239);">X-Values</div>
<div class="t" style="top:250px;line-height:15px;height:15px;font-size:13px;color:#e8e8e8;-webkit-text-stroke:0.45px;left:1112.56px;transform-origin:0 50%;transform:scaleX(0.9335);">Y-Values</div>
<div class="t" style="top:358px;line-height:15px;height:15px;font-size:13px;color:#e8e8e8;-webkit-text-stroke:0.45px;left:1111.79px;transform-origin:0 50%;transform:scaleX(0.97);">Details</div>
<div class="t" style="top:451px;line-height:15px;height:15px;font-size:13px;color:#e8e8e8;-webkit-text-stroke:0.45px;left:1112.17px;transform-origin:0 50%;transform:scaleX(0.964);">Color</div>
<div class="t" style="top:559px;line-height:14px;height:14px;font-size:12px;color:#e8e8e8;left:1112.55px;transform-origin:0 50%;transform:scaleX(0.9456);">Shape</div>
<div class="t" style="top:590px;line-height:14px;height:14px;font-size:12px;color:#e8e8e8;left:1112.77px;transform-origin:0 50%;transform:scaleX(0.9699);">Trellis Vertical</div>
<div class="t" style="top:621px;line-height:14px;height:14px;font-size:12px;color:#e8e8e8;left:1112.76px;transform-origin:0 50%;transform:scaleX(0.9948);">Trellis Horizontal</div>
<div class="t" style="top:652px;line-height:14px;height:14px;font-size:12px;color:#e8e8e8;left:1112.05px;transform-origin:0 50%;transform:scaleX(0.9898);">Filters</div>
<div class="t" style="top:683px;line-height:14px;height:14px;font-size:12px;color:#e8e8e8;left:1112.55px;transform-origin:0 50%;transform:scaleX(0.9358);">Size</div>
<div class="t" style="top:714px;line-height:14px;height:14px;font-size:12px;color:#e8e8e8;left:1112.08px;transform-origin:0 50%;transform:scaleX(0.9536);">Labels</div>
<div class="t" style="top:745px;line-height:14px;height:14px;font-size:12px;color:#e8e8e8;left:1112.75px;transform-origin:0 50%;transform:scaleX(1.0453);">Tooltip</div>
<div class="t" style="top:776px;line-height:14px;height:14px;font-size:12px;color:#e8e8e8;left:1111.95px;transform-origin:0 50%;transform:scaleX(1.0889);">Motion</div>
<div class="t" style="top:187px;line-height:14px;height:14px;font-size:12px;color:#fff;left:1111.43px;transform-origin:0 50%;transform:scaleX(0.9536);">Cost</div>
<div class="t" style="top:280px;line-height:14px;height:14px;font-size:12px;color:#fff;left:1111.11px;transform-origin:0 50%;transform:scaleX(0.9268);">Expenses</div>
<div class="t" style="top:308px;line-height:14px;height:14px;font-size:12px;color:#fff;left:1111.08px;transform-origin:0 50%;transform:scaleX(0.958);">Exponential Regression Expens...</div>
<div class="t" style="top:388px;line-height:14px;height:14px;font-size:12px;color:#fff;left:1111.02px;transform-origin:0 50%;transform:scaleX(1.023);">Manufacturer</div>
<div class="t" style="top:481px;line-height:14px;height:14px;font-size:12px;color:#fff;left:1111.11px;transform-origin:0 50%;transform:scaleX(0.9268);">Expenses</div>
<div class="t" style="top:509px;line-height:14px;height:14px;font-size:12px;color:#fff;left:1111.08px;transform-origin:0 50%;transform:scaleX(0.958);">Exponential Regression Expens...</div>
<div style="left:1070px;top:783px;width:255px;height:11px;background:#484848;"></div>
<div class="t" style="left:1346px;top:137.4px;font-size:13px;-webkit-text-stroke:0.45px;color:#e6e6e6;line-height:12px;height:12px;transform-origin:0 0;transform:rotate(90deg) translate(0,-11.2px) scaleX(0.9335);">Formatting Panel</div>
<div style="left:0px;top:794px;width:1368px;height:3px;background:#1e1e1e;"></div>
<div style="left:0px;top:797px;width:1368px;height:37px;background:#161616;"></div>
<div style="left:100px;top:803px;width:240px;height:27px;background:#45484b;border-bottom:3px solid #3cb82e;border-radius:0 0 7px 7px;"></div>
<svg class="ov" width="1368" height="834" viewBox="0 0 1368 834" >
<path d="M0 798.4 H341.5 Q345.2 798.4 345.2 802 V824 Q345.2 827.8 349 827.8 H587.6 Q591.4 827.8 591.4 824 V802 Q591.4 798.4 595 798.4 H1368" fill="none" stroke="#3cb82e" stroke-width="3.2"/>
<path d="M13.8 812 H27.2 M13.8 816 H27.2 M13.8 820 H27.2" stroke="#f2f2f2" stroke-width="2.1"/>
<path d="M47 821.3 V808 H54.6 L56 810.9 H61.9 V821.3 Z" fill="#d2d2d2"/><circle cx="57.6" cy="817.6" r="4.9" fill="#161616" stroke="#e4e4e4" stroke-width="1.2"/><path d="M54.6 821.6 L52.6 823.8" stroke="#e4e4e4" stroke-width="1.2"/>
<path d="M77.6 809.8 H85.4 L82.6 813.4 V817.6 H80.4 V813.4 Z" fill="none" stroke="#ececec" stroke-width="1.2"/><path d="M88 809.8 H92.6 V819.3 H82 V822.4 H77.8 V816" fill="none" stroke="#ececec" stroke-width="1.2"/><path d="M84 822 H87.6 M89 822 H92.8" stroke="#ececec" stroke-width="1.3"/>
<rect x="116" y="810.5" width="3" height="8.5" fill="#3cb82e"/><rect x="120.1" y="812.2" width="3" height="6.8" fill="#3cb82e"/><rect x="124.1" y="808.3" width="3" height="10.7" fill="#3cb82e"/>
<rect x="362.1" y="810.8" width="2.8" height="7.8" fill="#3cb82e"/><rect x="366" y="812.4" width="2.8" height="6.2" fill="#3cb82e"/><rect x="369.8" y="808.6" width="2.8" height="10" fill="#3cb82e"/>
<path d="M576.4 811 H585.8 L581.1 816.2 Z" fill="#f4f4f4"/>
<path d="M613.8 810 V821.8 M608 815.9 H619.6" stroke="#f4f4f4" stroke-width="1.9"/>
<path d="M1239.6 808 L1231 819.6 L1239.6 824 Z" fill="none" stroke="#bcbcbc" stroke-width="0.6"/>
<path d="M1238.8 810.0 L1231.6 819.2" stroke="#c8c8c8" stroke-width="0.6"/>
<path d="M1237.6 811.5 L1232.6 819.8" stroke="#c8c8c8" stroke-width="0.6"/>
<path d="M1236.5 813.0 L1233.6 820.3" stroke="#c8c8c8" stroke-width="0.6"/>
<path d="M1235.3 814.5 L1234.6 820.9" stroke="#c8c8c8" stroke-width="0.6"/>
<path d="M1234.2 816.0 L1235.6 821.4" stroke="#c8c8c8" stroke-width="0.6"/>
<path d="M1233.0 817.5 L1236.6 822.0" stroke="#c8c8c8" stroke-width="0.6"/>
<path d="M1231.9 819.0 L1237.6 822.5" stroke="#c8c8c8" stroke-width="0.6"/>
<path d="M1241.4 808 L1246.8 819.6 L1241.4 824 Z M1242.8 813 V820.6 L1245.2 818.6 Z" fill="none" stroke="#d8d8d8" stroke-width="0.9"/>
<circle cx="1264.9" cy="815.7" r="8.1" fill="#f0201e"/>
<path d="M1280.4 809.4 L1286.6 814.4 L1285.4 815.6 L1284 815 L1281.6 818.6 L1282 820.6 L1281 821.4 L1275.6 816.4 L1276.6 815.4 L1278.6 815.6 L1281 812 L1279.6 810.4 Z M1282.6 818.6 L1289.8 823.8" fill="none" stroke="#e0e0e0" stroke-width="1.1"/>
<path d="M1299 814 H1305 L1302 819 Z" fill="#dceeff"/>
<path d="M1323.7 816.2 L1323.7 816.0 L1323.6 815.7 L1323.5 815.5 L1323.2 815.3 L1322.9 815.1 L1322.6 815.0 L1322.2 815.0 L1321.8 815.1 L1321.4 815.3 L1321.0 815.6 L1320.8 816.0 L1320.6 816.4 L1320.5 817.0 L1320.5 817.5 L1320.7 818.0 L1321.0 818.6 L1321.4 819.0 L1322.0 819.3 L1322.6 819.6 L1323.3 819.6 L1324.0 819.5 L1324.7 819.3 L1325.3 818.9 L1325.8 818.3 L1326.2 817.6 L1326.5 816.8 L1326.5 816.0 L1326.4 815.1 L1326.1 814.3 L1325.5 813.6 L1324.8 812.9 L1324.0 812.5 L1323.1 812.2 L1322.0 812.1 L1321.0 812.3 L1320.1 812.8 L1319.2 813.4 L1318.5 814.2 L1318.0 815.2 L1317.7 816.3 L1317.6 817.5 L1317.9 818.7 L1318.4 819.8 L1319.1 820.8 L1320.1 821.6 L1321.3 822.1 L1322.5 822.5 L1323.9 822.5 L1325.2 822.2 L1326.4 821.6 L1327.5 820.7 L1328.4 819.6 L1329.0 818.3 L1329.4 816.9 L1329.4 815.4 L1329.0 813.9 L1328.4 812.5 L1327.4 811.3 L1326.1 810.3 L1324.7 809.6" fill="none" stroke="#d8d8d8" stroke-width="1.1"/>
<path d="M1351.2 809.6 A7 7 0 0 1 1351.2 823.6" fill="none" stroke="#e0e0e0" stroke-width="1.2"/><path d="M1351.2 823.6 A7 7 0 0 1 1351.2 809.6" fill="none" stroke="#e0e0e0" stroke-width="1.3" stroke-dasharray="1.2 2.4"/><path d="M1351.2 812.8 V817.2 H1354.4 M1348.6 808.2 H1353.8 M1356.4 809.8 L1357.6 811" fill="none" stroke="#e0e0e0" stroke-width="1.1"/>
<path d="M0 834 V827.5 Q0.5 833.5 6.5 834 Z" fill="#e8e8e8"/><path d="M1368 834 V828.5 Q1367.5 833.5 1362 834 Z" fill="#666"/>
</svg>
<div class="t" style="top:807px;line-height:17px;height:17px;font-size:16px;color:#b8bcc0;left:106.4px;">*</div>
<div class="t" style="top:806px;line-height:15px;height:15px;font-size:13px;color:#9da3a9;left:131.72px;transform-origin:0 50%;transform:scaleX(0.8965);">Chart - Sales by ProdCat (Color Fill)</div>
<div class="t" style="top:807px;line-height:17px;height:17px;font-size:16px;color:#f4f4f4;font-weight:700;left:352.4px;">*</div>
<div class="t" style="top:805px;line-height:15px;height:15px;font-size:13px;color:#f4f4f4;-webkit-text-stroke:0.45px;left:377.25px;transform-origin:0 50%;transform:scaleX(1.009);">Plotted - Sales by ProdCat (Co...</div>
<div class="t" style="top:810px;line-height:12px;height:12px;font-size:11px;color:#fff;letter-spacing:-0.5px;left:964.7px;width:600px;text-align:center;">12</div>
<div style="left:832px;top:89.5px;width:109px;height:85px;background:#323232;border:1px solid #1c1c1c;border-radius:6px;box-shadow:1px 2px 4px rgba(0,0,0,.4);overflow:hidden;"></div>
<div style="left:833px;top:118.2px;width:107px;height:27.8px;background:#202020;"></div>
<svg class="ov" width="1368" height="834" viewBox="0 0 1368 834" >
<path d="M840 103.8 H854.4" stroke="#5aa3d6" stroke-width="1.6" stroke-dasharray="1.8 1.4"/><path d="M840 131.9 H854.4" stroke="#5aa3d6" stroke-width="1.6" stroke-dasharray="4 1.2"/><path d="M840 160 H854.4" stroke="#5aa3d6" stroke-width="1.6"/>
</svg>
<div class="t" style="top:97px;line-height:15px;height:15px;font-size:13px;color:#ececec;-webkit-text-stroke:0.45px;left:862.32px;transform-origin:0 50%;transform:scaleX(0.9431);">Dotted Line</div>
<div class="t" style="top:125px;line-height:15px;height:15px;font-size:13px;color:#ececec;-webkit-text-stroke:0.45px;left:862.36px;transform-origin:0 50%;transform:scaleX(0.9049);">Dashed Line</div>
<div class="t" style="top:153px;line-height:15px;height:15px;font-size:13px;color:#ececec;-webkit-text-stroke:0.45px;left:862.83px;transform-origin:0 50%;transform:scaleX(0.9046);">Solid Line</div>
<svg class="ov" width="1368" height="834" viewBox="0 0 1368 834" >
<defs><filter id="ash" x="-30%" y="-10%" width="160%" height="130%"><feDropShadow dx="1.4" dy="1.2" stdDeviation="1.3" flood-color="#000" flood-opacity="0.45"/></filter></defs>
<path d="M890 14 Q892 5 897.5 0 H909.8 V14 Z" fill="#000"/>
<path d="M898.3 -1 L905.3 -1 L882.3 58.4 L885.2 54.9 L888.8 59.5 L873.1 74.3 L871 51.9 L877.8 52 Z" fill="#d686b4" filter="url(#ash)"/>
<path d="M931.7 148.6 L931.7 135.7 A1.4 1.4 0 0 1 934.5 135.7 L934.5 141 A1.45 1.3 0 0 1 937.4 141 A1.5 1.3 0 0 1 940.4 141.3 A1.5 1.3 0 0 1 943.4 142.2 L943.4 150.5 Q943.4 154.5 941.2 156.2 Q939.5 157.4 937.2 157.3 Q934.2 157.2 932.6 155 L927.2 149.1 Q926.3 147.7 927.5 147 Q928.6 146.5 929.7 147.4 Z" fill="#fff" stroke="#0c0c22" stroke-width="1" stroke-linejoin="round"/><path d="M934.5 141 V144.8 M937.4 141 V144.8 M940.4 141.4 V144.8" stroke="#0c0c22" stroke-width="0.9" fill="none"/>
</svg>
</div></body></html>
